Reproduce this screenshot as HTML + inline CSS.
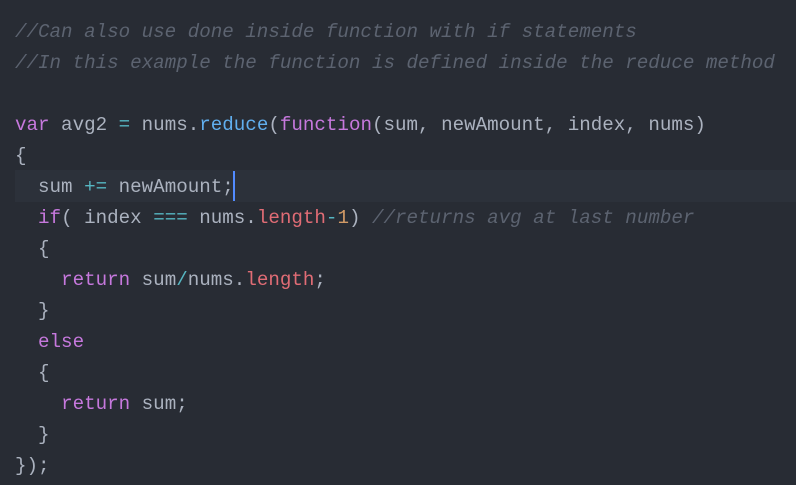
<!DOCTYPE html>
<html><head><style>
html,body{margin:0;padding:0;background:#282c34;width:796px;height:485px;overflow:hidden}
pre{margin:0;position:absolute;left:15px;top:16.5px;font-family:"Liberation Mono","DejaVu Sans Mono",monospace;font-size:19.2px;line-height:31px;color:#abb2bf;white-space:pre}
.c{color:#5c6370;font-style:italic}
.k{color:#c678dd}.f{color:#61afef}.o{color:#56b6c2}.r{color:#e06c75}.n{color:#d19a66}
.hl{position:absolute;left:15px;right:0;top:170px;height:32px;background:#2c313a}
.cur{position:absolute;left:233px;top:171px;width:2px;height:30px;background:#528bff}
</style></head><body>
<div class="hl"></div>
<pre><span class="c">//Can also use done inside function with if statements</span>
<span class="c">//In this example the function is defined inside the reduce method</span>

<span class="k">var</span> avg2 <span class="o">=</span> nums.<span class="f">reduce</span>(<span class="k">function</span>(sum, newAmount, index, nums)
{
  sum <span class="o">+=</span> newAmount;
  <span class="k">if</span>( index <span class="o">===</span> nums.<span class="r">length</span><span class="o">-</span><span class="n">1</span>) <span class="c">//returns avg at last number</span>
  {
    <span class="k">return</span> sum<span class="o">/</span>nums.<span class="r">length</span>;
  }
  <span class="k">else</span>
  {
    <span class="k">return</span> sum;
  }
});</pre>
<div class="cur"></div>
</body></html>
